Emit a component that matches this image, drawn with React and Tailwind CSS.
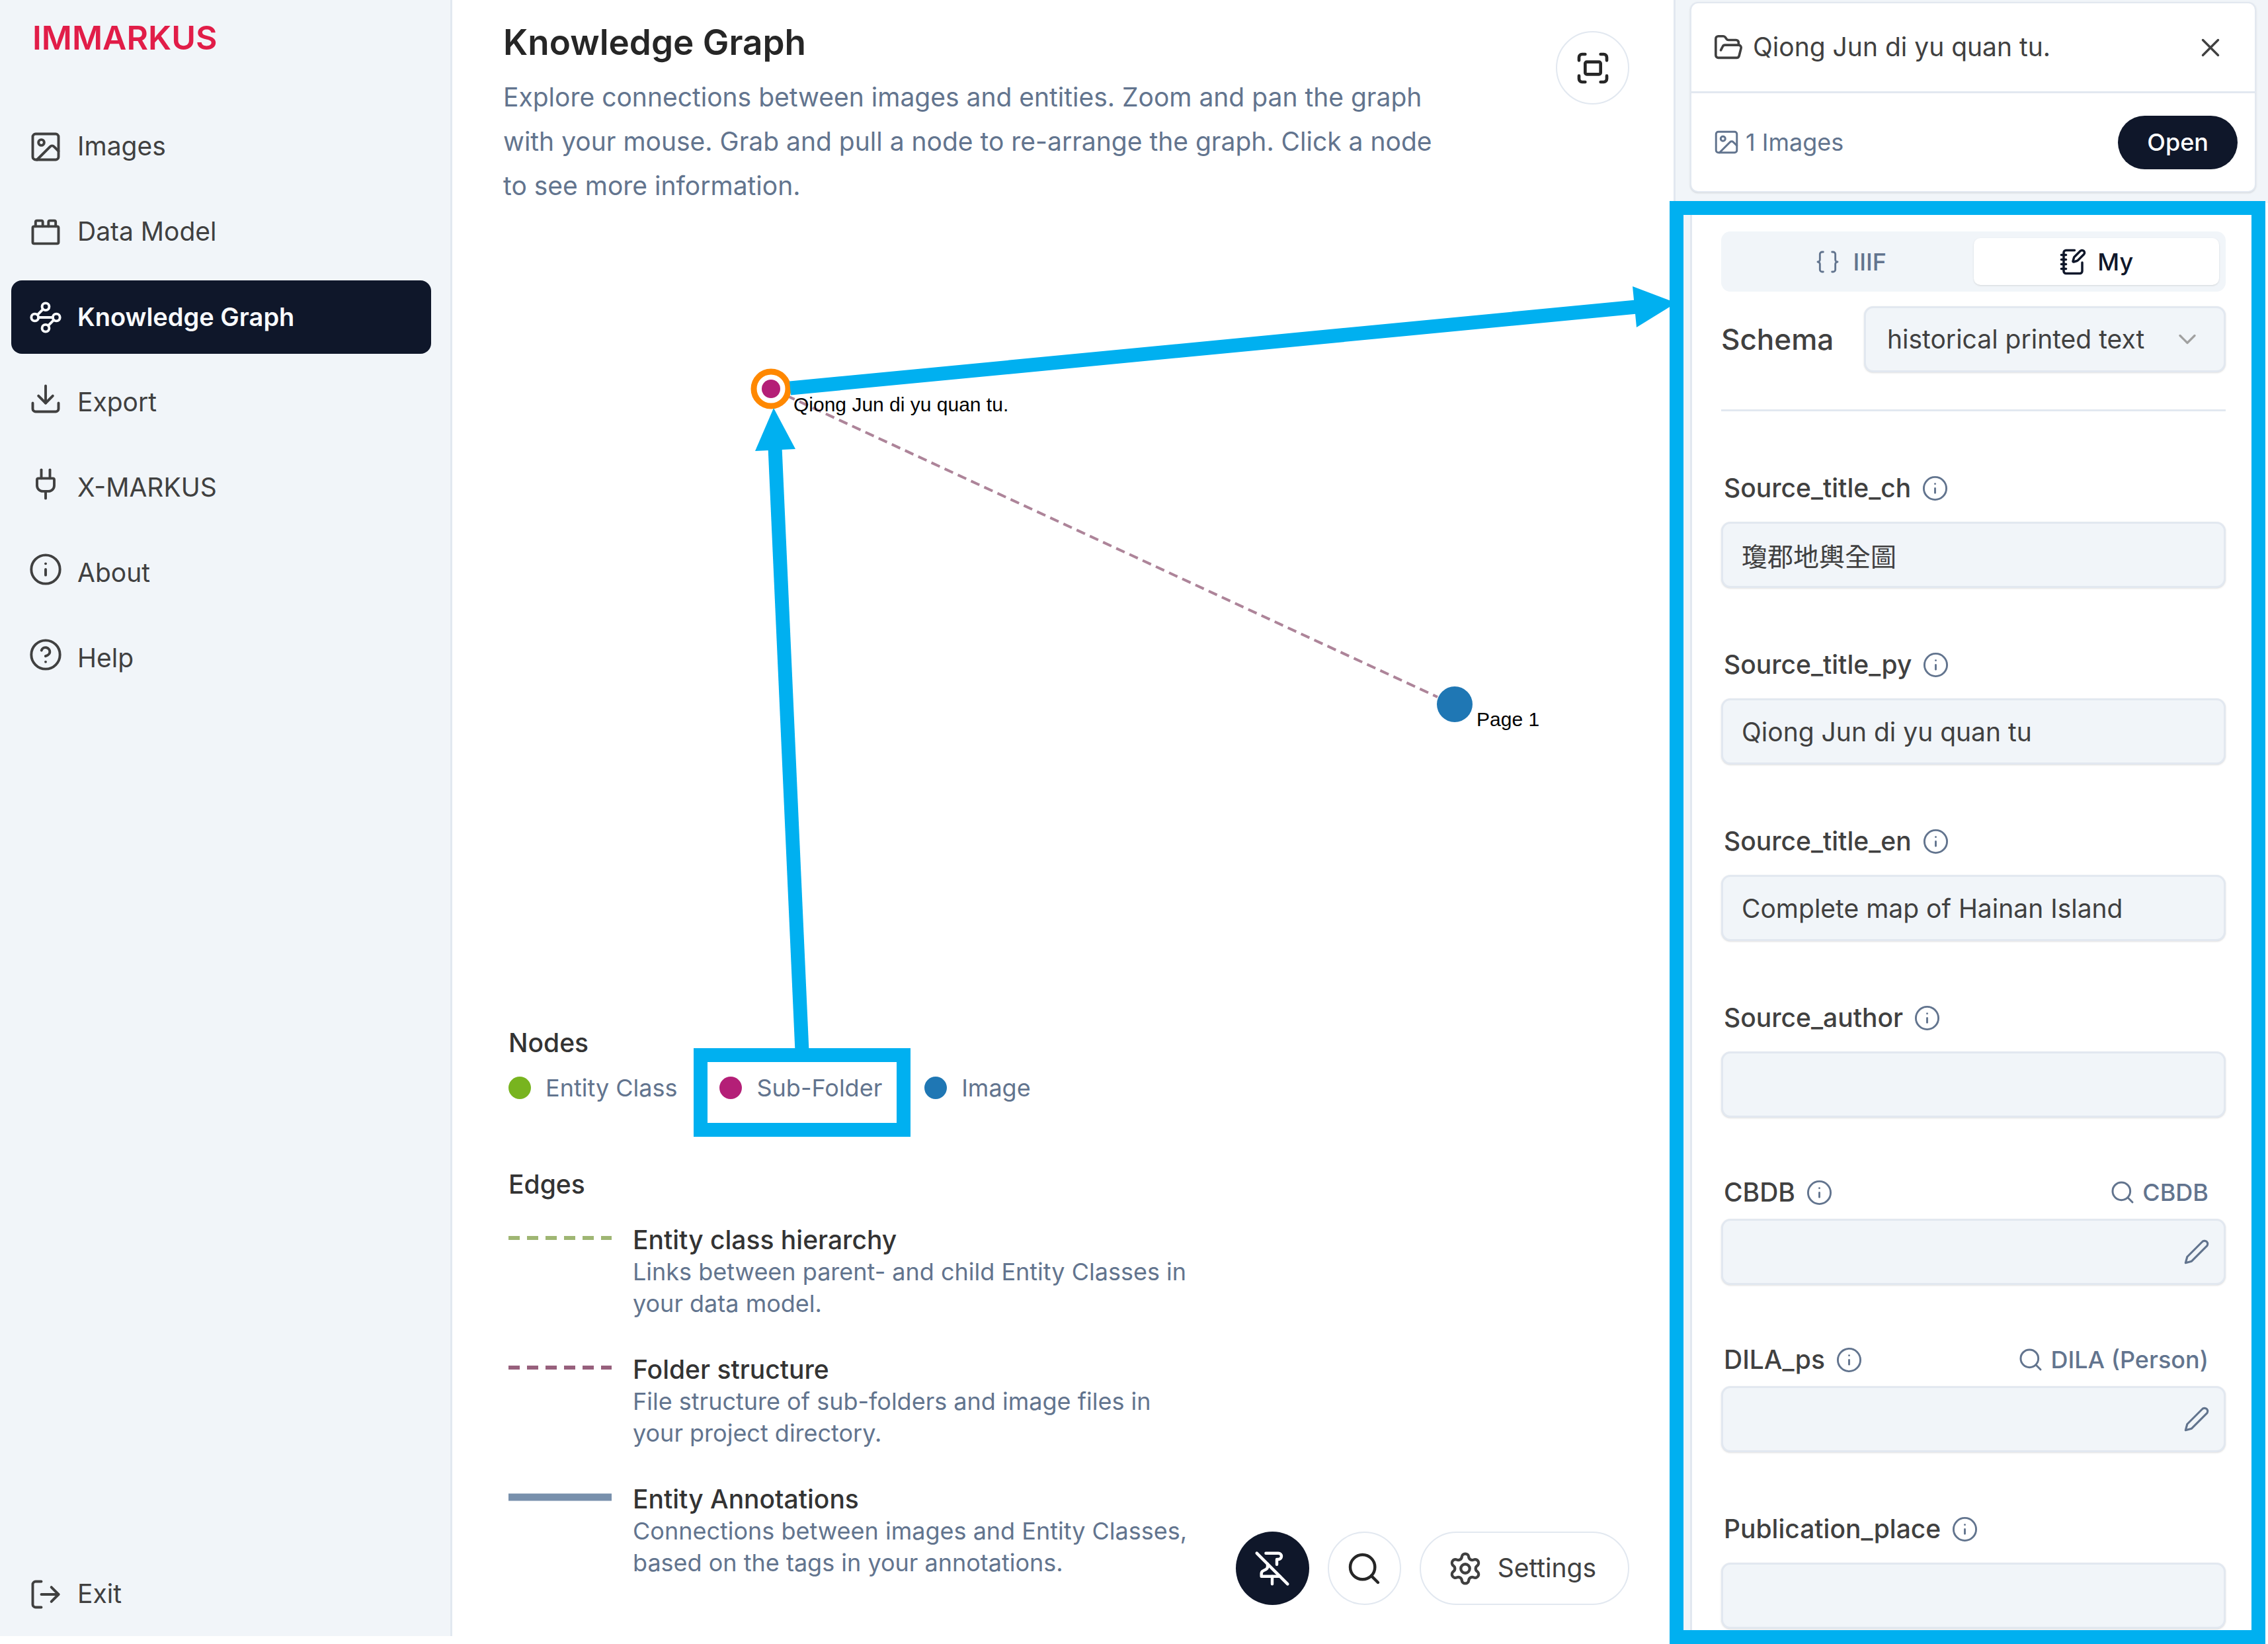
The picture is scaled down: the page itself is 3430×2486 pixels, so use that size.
import {
  Image as ImageIcon,
  ToyBrick,
  Waypoints,
  Download,
  Plug,
  Info,
  CircleHelp,
  LogOut,
  Fullscreen,
  Search,
  Settings,
  FolderOpen,
  X,
  Braces,
  NotebookPen,
  ChevronDown,
} from 'lucide-react';

const NAV = [
  { label: 'Images', icon: ImageIcon },
  { label: 'Data Model', icon: ToyBrick },
  { label: 'Knowledge Graph', icon: Waypoints, active: true },
  { label: 'Export', icon: Download, raised: true },
  { label: 'X-MARKUS', icon: Plug, raised: true },
  { label: 'About', icon: Info, raised: true },
  { label: 'Help', icon: CircleHelp, raised: true },
];

const EDGES = [
  {
    title: 'Entity class hierarchy',
    text: 'Links between parent- and child Entity Classes in your data model.',
    color: '#9fb673',
    width: 6,
    dash: '17 11',
  },
  {
    title: 'Folder structure',
    text: 'File structure of sub-folders and image files in your project directory.',
    color: '#97607c',
    width: 6,
    dash: '17 11',
  },
  {
    title: 'Entity Annotations',
    text: 'Connections between images and Entity Classes, based on the tags in your annotations.',
    color: '#7890ac',
    width: 11,
  },
];

const FIELDS = [
  { name: 'Source_title_ch', value: '瓊郡地輿全圖' },
  { name: 'Source_title_py', value: 'Qiong Jun di yu quan tu' },
  { name: 'Source_title_en', value: 'Complete map of Hainan Island' },
  { name: 'Source_author', value: '' },
  { name: 'CBDB', value: '', search: 'CBDB' },
  { name: 'DILA_ps', value: '', search: 'DILA (Person)' },
  { name: 'Publication_place', value: '' },
];

function PinOffIcon({ className }) {
  return (
    <svg className={className} viewBox="0 0 24 24" fill="none" stroke="currentColor" strokeWidth="1.9" strokeLinecap="round" strokeLinejoin="round" aria-hidden="true">
      <path d="M2 2l20 20M12 17v5" />
      <path d="M9 9v1.76a2 2 0 0 1-1.11 1.79l-1.78.9A2 2 0 0 0 5 15.24V17h12" />
      <path d="M15 9.34V6h1a2 2 0 0 0 0-4H7.89" />
    </svg>
  );
}

function PencilIcon({ className }) {
  return (
    <svg className={className} viewBox="0 0 24 24" fill="none" stroke="currentColor" strokeWidth="1.9" strokeLinecap="round" strokeLinejoin="round" aria-hidden="true">
      <path d="M17 3a2.85 2.83 0 1 1 4 4L7.5 20.5 2 22l1.5-5.5Z" />
    </svg>
  );
}

function NavLink({ label, icon: Icon, active, raised }) {
  return (
    <a
      href="#"
      className={
        active
          ? 'flex h-[111px] items-center gap-[22px] rounded-2xl bg-[#0f172a] px-[26px] text-[38px] font-semibold text-slate-50'
          : 'flex h-[111px] items-center gap-[22px] rounded-2xl px-[26px] text-[39px] text-neutral-700'
      }
    >
      <Icon className={raised ? 'mb-3 size-[52px]' : 'size-[52px]'} strokeWidth={1.8} />
      {label}
    </a>
  );
}

function Sidebar() {
  return (
    <nav className="flex w-[684px] shrink-0 flex-col border-r-3 border-slate-200 bg-slate-100 px-[17px] pt-[27px] pb-2">
      <h1 className="px-8 text-[50px] leading-[60px] font-semibold text-[#e11d48]">IMMARKUS</h1>
      <ul className="mt-[79px] flex flex-1 flex-col gap-[18px] pr-3">
        {NAV.map((item) => (
          <li key={item.label}>
            <NavLink {...item} />
          </li>
        ))}
        <li className="mt-auto">
          <NavLink label="Exit" icon={LogOut} />
        </li>
      </ul>
    </nav>
  );
}

function Graph() {
  return (
    <svg className="absolute inset-0 size-full overflow-visible" aria-label="Graph of folders and images">
      <line x1="505" y1="598" x2="1490" y2="1054" stroke="#ad8499" strokeWidth="4" strokeDasharray="14 8" />
      <circle cx="482" cy="588" r="26" fill="#fff" stroke="#ff8800" strokeWidth="9" />
      <circle cx="482" cy="588" r="14" fill="#b41f77" />
      <circle cx="1516" cy="1065" r="27" fill="#1f77b4" />
      <g className="font-['Liberation_Sans',sans-serif] text-[30px]" fill="#000">
        <text x="516" y="622">Qiong Jun di yu quan tu.</text>
        <text x="1549" y="1098">Page 1</text>
      </g>
    </svg>
  );
}

function Arrows() {
  return (
    <svg className="pointer-events-none absolute inset-0 z-10 size-full" aria-hidden="true">
      <g stroke="#00b0f0" strokeWidth="21">
        <line x1="1195" y1="587" x2="2475" y2="464" />
        <line x1="1172" y1="676" x2="1213" y2="1590" />
      </g>
      <g fill="#00b0f0">
        <polygon points="2535,458 2469,433 2475,495" />
        <polygon points="1170,617 1142,682 1203,679" />
      </g>
    </svg>
  );
}

function NodeKey({ color, label, framed }) {
  return (
    <li className="relative flex items-center gap-[22px]">
      <span className={`size-[34px] rounded-full ${color}`} />
      {label}
      {framed && <span className="absolute -top-9 -right-[43px] -bottom-[50px] -left-[39px] border-[21px] border-[#00b0f0]" />}
    </li>
  );
}

function Legend() {
  return (
    <section className="w-[1030px] text-[36px] leading-[48px] text-slate-500">
      <h3 className="text-[39px] font-medium text-[#333333]">Nodes</h3>
      <ul className="mt-5 flex gap-16">
        <NodeKey color="bg-[#78b41f]" label="Entity Class" />
        <NodeKey color="bg-[#b41f77]" label="Sub-Folder" framed />
        <NodeKey color="bg-[#1f77b4]" label="Image" />
      </ul>
      <h3 className="mt-[98px] text-[39px] font-medium text-[#333333]">Edges</h3>
      <ul className="mt-9 flex flex-col gap-[52px]">
        {EDGES.map((e) => (
          <li key={e.title} className="flex gap-8">
            <svg className="h-11 w-[156px] shrink-0" aria-hidden="true">
              <line x1="0" y1="21" x2="156" y2="21" stroke={e.color} strokeWidth={e.width} strokeDasharray={e.dash} />
            </svg>
            <div>
              <h4 className="text-[39px] font-medium text-[#333333]">{e.title}</h4>
              <p>{e.text}</p>
            </div>
          </li>
        ))}
      </ul>
    </section>
  );
}

function Main() {
  return (
    <main className="relative flex min-w-0 flex-1 flex-col justify-between bg-white pr-[67px] pb-[47px] pl-[77px]">
      <Graph />
      <header className="relative flex items-start justify-between pt-[30px]">
        <div className="max-w-[1420px]">
          <h2 className="text-[53px] leading-[68px] font-semibold text-neutral-800">Knowledge Graph</h2>
          <p className="mt-[15px] text-[39px] leading-[67px] text-slate-500">
            Explore connections between images and entities. Zoom and pan the graph with your mouse. Grab and pull a
            node to re-arrange the graph. Click a node to see more information.
          </p>
        </div>
        <button aria-label="Fullscreen" className="mt-[17px] flex size-[111px] items-center justify-center rounded-full border-2 border-slate-200 bg-white text-neutral-800">
          <Fullscreen className="size-14" strokeWidth={2} />
        </button>
      </header>
      <div className="relative flex items-end justify-between">
        <div className="pb-10 pl-2">
          <Legend />
        </div>
        <div className="flex gap-7">
          <button aria-label="Unpin nodes" className="flex size-[111px] items-center justify-center rounded-full bg-[#0f172a] text-white">
            <PinOffIcon className="size-14" />
          </button>
          <button aria-label="Search" className="flex size-[111px] items-center justify-center rounded-full border-2 border-slate-200 bg-white text-neutral-800">
            <Search className="size-14" strokeWidth={1.9} />
          </button>
          <button className="flex h-[111px] items-center gap-[22px] rounded-full border-2 border-slate-200 bg-white pr-12 pl-10 text-[39px] text-neutral-700">
            <Settings className="size-[54px]" strokeWidth={1.9} />
            Settings
          </button>
        </div>
      </div>
    </main>
  );
}

function Field({ name, value, search }) {
  return (
    <div className={search ? 'flex flex-col gap-5' : 'flex flex-col gap-7'}>
      <div className={search ? 'flex h-10 items-center justify-between pr-[26px] pl-1' : 'flex h-[46px] items-center pl-1'}>
        <div className="flex items-center gap-4 text-[39px] leading-10 font-medium text-neutral-700">
          <label htmlFor={name}>{name}</label>
          <Info className="size-[41px] text-slate-500" strokeWidth={1.7} />
        </div>
        {search && (
          <button className="flex items-center gap-2.5 text-[36px] leading-10 font-medium text-slate-500">
            <Search className="size-10" strokeWidth={1.8} />
            {search}
          </button>
        )}
      </div>
      <div className="relative">
        <input
          id={name}
          type="text"
          defaultValue={value}
          className="block h-[100px] w-full rounded-[14px] border-3 border-slate-200 bg-slate-100 px-7 text-[39px] text-neutral-700 shadow-sm"
        />
        {search && (
          <button aria-label={`Edit ${name}`} className="absolute inset-y-0 right-6 flex items-center text-slate-500">
            <PencilIcon className="size-10" />
          </button>
        )}
      </div>
    </div>
  );
}

function DetailsPanel() {
  return (
    <aside className="relative w-[899px] shrink-0">
      <div className="flex h-full flex-col gap-4 overflow-hidden border-l-3 border-slate-200 bg-slate-100 pt-[3px] pl-[22px]">
        <section className="mr-[18px] rounded-xl border-2 border-slate-200 bg-white shadow-sm">
          <header className="flex h-[136px] items-center gap-3.5 border-b-3 border-slate-200 pr-11 pl-[33px] text-[39px] text-neutral-700">
            <FolderOpen className="size-[46px]" strokeWidth={1.9} />
            <h2>Qiong Jun di yu quan tu.</h2>
            <button aria-label="Close" className="ml-auto">
              <X className="size-[46px]" strokeWidth={1.8} />
            </button>
          </header>
          <div className="flex h-[148px] items-center gap-2 pr-[26px] pl-8 text-[36px] text-slate-500">
            <ImageIcon className="size-[42px]" strokeWidth={1.7} />
            1 Images
            <button className="ml-auto h-[81px] rounded-full bg-[#0f172a] px-11 font-medium text-white">Open</button>
          </div>
        </section>
        <section className="flex-1 border-l-3 border-slate-200 bg-white pt-[43px] pr-16 pl-11">
          <div role="tablist" className="grid h-[91px] grid-cols-2 rounded-[14px] bg-slate-100 p-2.5 text-[36px] font-medium">
            <button role="tab" aria-selected="false" className="flex items-center justify-center gap-[18px] text-slate-500">
              <Braces className="size-10" strokeWidth={1.7} />
              IIIF
            </button>
            <button role="tab" aria-selected="true" className="flex items-center justify-center gap-4 rounded-[10px] bg-white text-[#0f172a] shadow-sm">
              <NotebookPen className="size-[42px]" strokeWidth={2} />
              My
            </button>
          </div>
          <div className="mt-[22px] flex items-center justify-between">
            <label htmlFor="schema" className="text-[44px] font-medium text-neutral-700">
              Schema
            </label>
            <div className="relative w-[547px]">
              <select id="schema" className="h-[100px] w-full appearance-none rounded-[14px] border-3 border-slate-200 bg-slate-100 px-8 text-[39px] text-neutral-700 shadow-sm">
                <option>historical printed text</option>
              </select>
              <ChevronDown className="pointer-events-none absolute inset-y-0 right-9 my-auto size-11 text-neutral-400" strokeWidth={1.8} />
            </div>
          </div>
          <hr className="mt-14 border-t-3 border-slate-200" />
          <div className="mt-[93px] flex flex-col gap-[93px]">
            {FIELDS.map((f) => (
              <Field key={f.name} {...f} />
            ))}
          </div>
        </section>
      </div>
      <div className="pointer-events-none absolute top-[304px] right-1 -bottom-3 -left-1.5 border-[21px] border-[#00b0f0]" />
    </aside>
  );
}

export default function App() {
  return (
    <div className="relative flex h-screen overflow-hidden bg-white pb-3 font-['Inter','Noto_Sans_CJK_TC',sans-serif] text-[39px]">
      <Sidebar />
      <Main />
      <DetailsPanel />
      <Arrows />
    </div>
  );
}
